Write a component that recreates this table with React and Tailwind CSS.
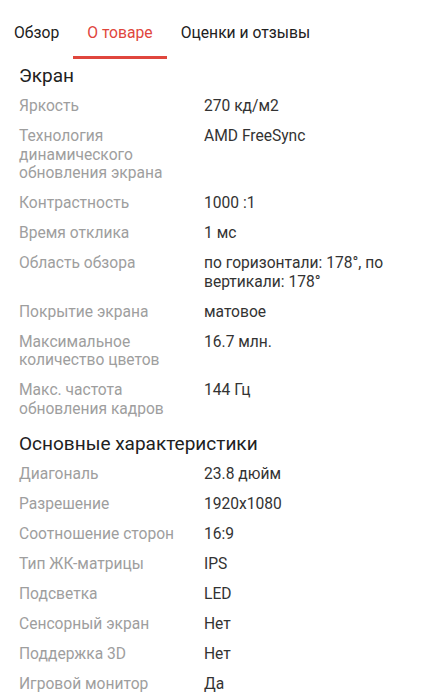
import React from "react";

const sections = [
  {
    title: "Экран",
    rows: [
      ["Яркость", "270 кд/м2"],
      ["Технология динамического обновления экрана", "AMD FreeSync"],
      ["Контрастность", "1000 :1"],
      ["Время отклика", "1 мс"],
      ["Область обзора", "по горизонтали: 178°, по вертикали: 178°"],
      ["Покрытие экрана", "матовое"],
      ["Максимальное количество цветов", "16.7 млн."],
      ["Макс. частота обновления кадров", "144 Гц"],
    ],
  },
  {
    title: "Основные характеристики",
    rows: [
      ["Диагональ", "23.8 дюйм"],
      ["Разрешение", "1920x1080"],
      ["Соотношение сторон", "16:9"],
      ["Тип ЖК-матрицы", "IPS"],
      ["Подсветка", "LED"],
      ["Сенсорный экран", "Нет"],
      ["Поддержка 3D", "Нет"],
      ["Игровой монитор", "Да"],
    ],
  },
];

const tabs = ["Обзор", "О товаре", "Оценки и отзывы"];

const App = () => {
  return (
    <div
      className="w-[425px] min-h-screen bg-white"
      style={{ fontFamily: "Roboto, 'Noto Sans', sans-serif" }}
    >
      <div className="flex">
        {tabs.map((tab, i) => (
          <div
            key={tab}
            className={
              i === 1
                ? "px-[14px] pt-[23px] pb-[13px] text-[15.7px] leading-[20px] text-[#e0463d] border-b-[3px] border-[#e0463d]"
                : "px-[14px] pt-[23px] pb-[13px] text-[15.7px] leading-[20px] text-[#212121] border-b-[3px] border-transparent"
            }
          >
            {tab}
          </div>
        ))}
      </div>

      <div className="px-[19px] pt-[5px]">
        {sections.map((section, si) => (
          <div key={section.title} className={si > 0 ? "mt-[14px]" : ""}>
            <h2 className="text-[19px] leading-[24px] text-[#212121] mb-[9px]">
              {section.title}
            </h2>
            <div className="flex flex-col gap-[11.5px]">
              {section.rows.map(([label, value]) => (
                <div key={label} className="flex text-[15.6px] leading-[18.5px]">
                  <div className="w-[185px] shrink-0 pr-[8px] text-[#9e9e9e]">
                    {label}
                  </div>
                  <div className="flex-1 text-[#333333]">{value}</div>
                </div>
              ))}
            </div>
          </div>
        ))}
      </div>
    </div>
  );
};

export default App;
